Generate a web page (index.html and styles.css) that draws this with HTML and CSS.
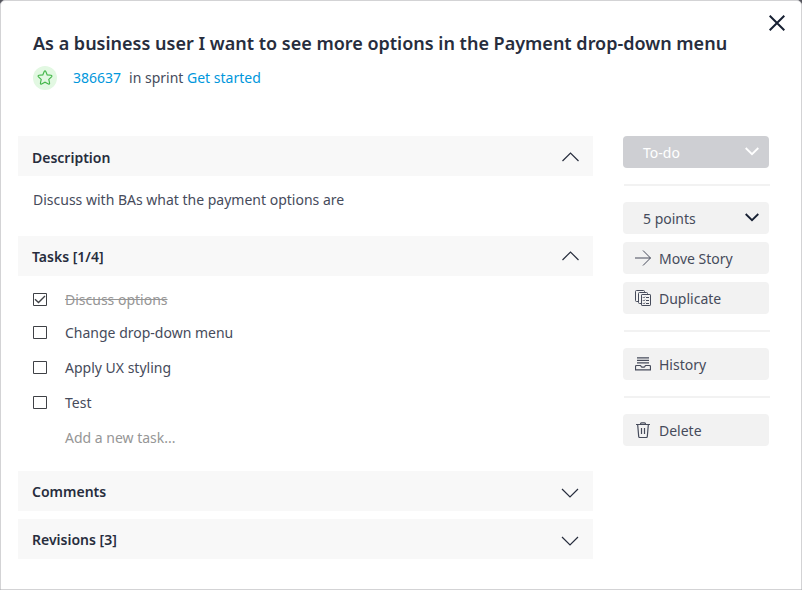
FILE: index.html
```html
<!DOCTYPE html>
<html lang="en">
<head>
<meta charset="utf-8">
<title>User story</title>
<link rel="stylesheet" href="styles.css">
</head>
<body>
<main class="dialog">
  <button class="close" aria-label="Close"><svg width="16" height="16" viewBox="0 0 16 16"><path d="M.7.7l14.6 14.6M15.3.7L.7 15.3"/></svg></button>
  <header class="header">
    <h1 class="title">As a business user I want to see more options in the Payment drop-down menu</h1>
    <div class="meta">
      <span class="badge"><svg width="16" height="16" viewBox="0 0 16 16"><path d="M7.200 1.500Q8 .2 8.800 1.500L10.200 4.900 14.100 5.300Q15.500 5.700 14.500 6.800L11.800 9.400 12.600 13.200Q12.600 14.600 11.400 14L8 12.200 4.600 14Q3.400 14.600 3.400 13.200L4.200 9.400 1.500 6.800Q.5 5.700 1.900 5.300L5.800 4.900z"/></svg></span>
      <a class="link number">386637</a><span class="sprint">in sprint <a class="link">Get started</a></span>
    </div>
  </header>
  <div class="body">
    <div class="content">
      <section>
        <h2 class="bar"><span class="lower">Description</span><svg class="chevron up lower" width="18" height="11" viewBox="0 -1 18 11"><path d="M1.500 9l8-8 8 8"/></svg></h2>
        <p class="description">Discuss with BAs what the payment options are</p>
      </section>
      <section>
        <h2 class="bar"><span>Tasks [1/4]</span><svg class="chevron up" width="18" height="10" viewBox="0 0 18 10"><path d="M1.500 9l8-8 8 8"/></svg></h2>
        <ul class="tasks">
          <li class="task first"><svg class="box" width="14" height="13" viewBox="0 0 14 13"><path d="M.5.5h13v12H.5z"/><path class="tick" d="M2 6.300l3.500 3.200L12 3"/></svg><span class="done">Discuss options</span></li>
          <li class="task"><svg class="box" width="14" height="13" viewBox="0 0 14 13"><path d="M.5.5h13v12H.5z"/></svg><span>Change drop-down menu</span></li>
          <li class="task"><svg class="box" width="14" height="13" viewBox="0 0 14 13"><path d="M.5.5h13v12H.5z"/></svg><span>Apply UX styling</span></li>
          <li class="task"><svg class="box" width="14" height="13" viewBox="0 0 14 13"><path d="M.5.5h13v12H.5z"/></svg><span>Test</span></li>
          <li class="task add"><span>Add a new task...</span></li>
        </ul>
      </section>
      <section class="closed"><h2 class="bar"><span>Comments</span><svg class="chevron down" width="18" height="10" viewBox="0 0 18 10"><path d="M1 1l8 8 8-8"/></svg></h2></section>
      <section><h2 class="bar"><span>Revisions [3]</span><svg class="chevron down" width="18" height="10" viewBox="0 0 18 10"><path d="M1 1l8 8 8-8"/></svg></h2></section>
    </div>
    <aside class="actions">
      <button class="button select status"><span>To-do</span><svg width="14" height="9" viewBox="0 0 14 9"><path d="M.7 1L7 7.200 13.300 1"/></svg></button>
      <hr class="rule">
      <button class="button select points"><span>5 points</span><svg width="14" height="9" viewBox="0 0 14 9"><path d="M.7 1L7 7.200 13.300 1"/></svg></button>
      <button class="button"><svg class="icon" width="16" height="16" viewBox="0 0 16 16"><path d="M0 8h15.500M8 .5L15.500 8 8 15.500"/></svg><span>Move Story</span></button>
      <button class="button"><svg class="icon" width="16" height="16" viewBox="0 0 16 16"><path d="M3.500 11.500h-2a1 1 0 0 1-1-1v-9a1 1 0 0 1 1-1h7a1 1 0 0 1 1 1v1M6.500 13.500h-2a1 1 0 0 1-1-1v-9a1 1 0 0 1 1-1h7a1 1 0 0 1 1 1v1"/><rect x="6.500" y="4.500" width="9" height="11" rx=".6"/><path d="M11 7.500h3M11 10.500h3M11 13.500h3M8 7.300l.7.700L10 6.700M8 10.300l.7.700L10 9.700M8 13.300l.7.700 1.300-1.300"/></svg><span>Duplicate</span></button>
      <hr class="rule">
      <button class="button"><svg class="icon" width="16" height="16" viewBox="0 0 16 16"><path d="M2 1.800h12M2 4.300h12M2 6.800h12M1.500 9.500h4c.5 0 .6 1.700 1.500 1.700h2c.9 0 1-1.700 1.500-1.700h4q1 0 1 1v3.300H.5v-3.300q0-1 1-1z" stroke-width="1.200"/></svg><span>History</span></button>
      <hr class="rule">
      <button class="button"><svg class="icon trash" width="16" height="16" viewBox="0 0 16 16"><path d="M1 2.500h14M5.500 2Q5.500.8 6.500.8h3q1 0 1 1.200M2.700 3l1 11.500q.1 1 1 1h6.600q.9 0 1-1l1-11.500M6.500 6v6M9.500 6v6"/></svg><span>Delete</span></button>
    </aside>
  </div>
</main>
</body>
</html>
```
FILE: styles.css
```css
* { box-sizing: border-box; }
body {
  margin: 0;
  background: #55565e;
  color: #464b5b;
  font: 14px/20px "Noto Sans", sans-serif;
}
svg { display: block; flex: none; fill: none; stroke: currentColor; }
button { padding: 0; border: 0; background: none; color: inherit; font: inherit; }
.dialog {
  position: relative;
  width: 802px;
  height: 590px;
  padding: 30px 0 0 17px;
  background: #fff;
  border: 1px solid #d3d3d5;
  border-radius: 5px 5px 0 0;
}
.close { position: absolute; top: 14px; right: 16px; color: #172033; stroke-width: 2; }
.header { height: 105px; padding-left: 15px; }
.title { margin: 0; color: #272d3d; font-size: 18px; font-weight: 600; line-height: 25px; white-space: nowrap; }
.meta { display: flex; align-items: center; height: 24px; margin-top: 10px; }
.badge { display: grid; place-items: center; width: 24px; height: 24px; margin-right: 16px; border-radius: 50%; background: #e2f8e2; color: #43b649; stroke-width: 1.15; }
.link { color: #0097dc; }
.number { margin-right: 8px; }
.body { display: flex; gap: 30px; }
.content { width: 575px; }
.bar { display: flex; align-items: center; justify-content: space-between; height: 40px; margin: 0; padding: 2px 14px 0; background: #f8f8f8; color: #272d3d; font-size: 14px; font-weight: 600; }
span.lower { padding-top: 1px; }
.chevron { stroke-width: 1.2; overflow: visible; }
.up { margin-top: -2px; }
.up.lower { margin-top: -1px; }
.down { margin-top: 2px; }
.description { height: 60px; margin: 0; padding: 14px 15px; }
.tasks { height: 195px; margin: 0; padding: 14px 15px 0; list-style: none; }
.task { display: flex; align-items: center; gap: 18px; height: 20px; margin-bottom: 15px; }
.first { margin-bottom: 13px; }
.box { margin-bottom: 1px; color: #3f4146; }
.tick { stroke-width: 1.4; }
.done { color: #969696; text-decoration: line-through; }
.add { padding-left: 32px; color: #969696; }
.closed { margin-bottom: 8px; }
.actions { width: 147px; }
.button { display: flex; align-items: center; gap: 8px; width: 146px; height: 32px; margin-bottom: 8px; padding: 2px 0 0 12px; border-radius: 4px; background: #f2f2f2; }
.select { justify-content: space-between; padding: 2px 10px 0 20px; }
.select svg { margin-top: -3px; color: #172033; stroke-width: 1.8; }
.status { background: #cecfd3; color: #fff; }
.status svg { color: #fff; }
.icon { margin-top: -2px; }
.trash { stroke-width: 1.2; }
.rule { height: 2px; margin: 16px 0 16px 1px; border: 0; background: #f2f2f2; }
```
